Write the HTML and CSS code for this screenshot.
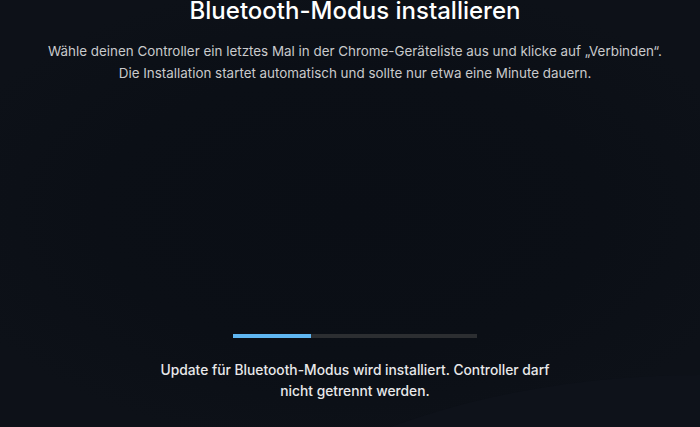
FILE: index.html
```html
<!DOCTYPE html>
<html lang="de">
<head>
  <meta charset="UTF-8" />
  <meta name="viewport" content="width=device-width, initial-scale=1.0" />
  <title>Bluetooth-Modus installieren</title>
  <link rel="stylesheet" href="styles.css">
</head>
<body>
  <div class="screen">
    <div class="glow"></div>

    <header class="intro">
      <h1>Bluetooth-Modus installieren</h1>
      <p>Wähle deinen Controller ein letztes Mal in der Chrome-Geräteliste aus und klicke auf „Verbinden“.<br>
      Die Installation startet automatisch und sollte nur etwa eine Minute dauern.</p>
    </header>

    <div class="install">
      <div class="progress">
        <div class="progress-fill" style="width: 32%"></div>
      </div>
      <p class="status">Update für Bluetooth-Modus wird installiert. Controller darf nicht getrennt werden.</p>
    </div>
  </div>
</body>
</html>
```

FILE: styles.css
```css
html, body {
  margin: 0;
  padding: 0;
  height: 100%;
}

body {
  background: #0b0f16;
  color: #fff;
  font-family: Inter, 'Noto Sans', sans-serif;
  overflow: hidden;
}

.screen {
  position: relative;
  height: 427px;
  padding-left: 10px;
  display: flex;
  flex-direction: column;
  align-items: center;
  background: radial-gradient(ellipse 60% 55% at 50% 50%, #0a0e15 0%, #0b0f16 60%, #0d1118 100%);
  overflow: hidden;
}

/* soft lighter sweep in the lower right corner */
.glow {
  position: absolute;
  left: 150px;
  top: 375px;
  width: 1100px;
  height: 600px;
  border-radius: 50%;
  background: #0e121a;
  pointer-events: none;
}

.intro,
.install {
  position: relative;
  text-align: center;
}

h1 {
  margin: 0;
  font-size: 24px;
  line-height: 22px;
  font-weight: 500;
  color: #fff;
}

.intro p {
  margin: 18px 0 0;
  font-size: 13.4px;
  line-height: 22px;
  color: #c9cacc;
}

.install {
  margin-top: auto;
  margin-bottom: 25px;
  display: flex;
  flex-direction: column;
  align-items: center;
}

.progress {
  width: 244px;
  height: 4px;
  background: #2c2e31;
}

.progress-fill {
  height: 100%;
  background: #5fb6f2;
}

.status {
  width: 400px;
  margin: 22px 0 0;
  font-size: 13.8px;
  line-height: 21px;
  font-weight: 500;
  color: #e8e8ea;
}
```
